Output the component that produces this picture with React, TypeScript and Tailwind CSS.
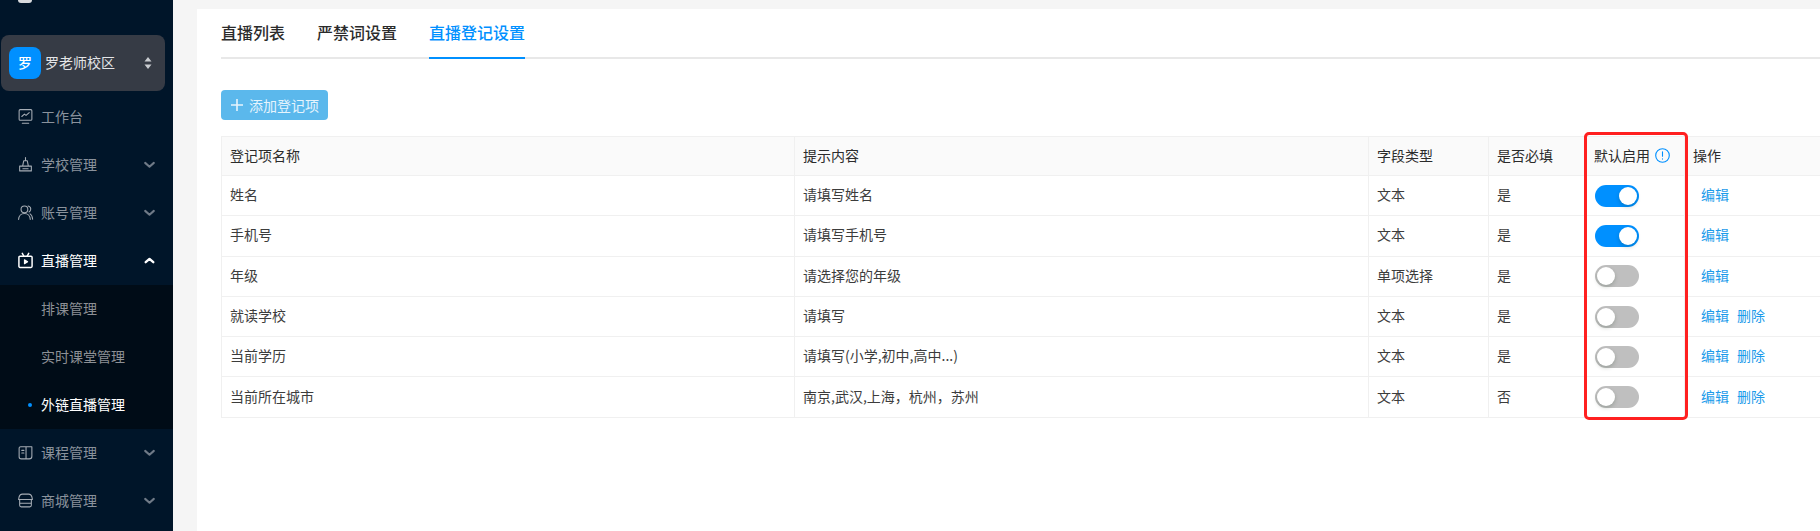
import React from "react";

const font = { fontFamily: '"Noto Sans CJK SC", "Noto Sans", sans-serif' };

const I = ({ children }: { children: React.ReactNode }) => (
  <svg width="17" height="17" viewBox="0 0 16 16" fill="none" stroke="currentColor" strokeWidth="1" strokeLinecap="round" strokeLinejoin="round" className="shrink-0">
    {children}
  </svg>
);

const Chevron = ({ up }: { up?: boolean }) => (
  <svg width="13" height="13" viewBox="0 0 12 12" fill="none" stroke="currentColor" strokeWidth={up ? 2.2 : 1.9} strokeLinecap="round" strokeLinejoin="round" className={up ? "text-white" : "text-[#6f7a87]"}>
    {up ? <path d="M2.500 7.500 6 4.500l3.500 3" /> : <path d="M2 4.500 6 8l4-3.500" />}
  </svg>
);

const icons: Record<string, React.ReactNode> = {
  work: <I><rect x="2" y="1.500" width="12" height="10" rx="1" /><path d="M4.500 8 7 5.800l1.500 1.200L11.500 4.300M5 14.300h6" /></I>,
  school: <I><path d="M8 1.500v2.500M6.300 4.500h3.400L10.700 9.500H5.300zM2.500 9.500h11v4.500h-11zM5.500 12h5" /></I>,
  account: <I><circle cx="7" cy="5" r="3.200" /><path d="M1.500 14.500c.2-3.200 2.500-5.500 5.500-5.500s5.300 2.300 5.500 5.500M10.500 1.900c1.700.5 2.700 2.100 2.300 3.700-.2.800-.7 1.500-1.500 1.900M12.300 9.300c1.400.8 2.200 2.700 2.400 5" /></I>,
  live: <I><rect x="1.800" y="4" width="12.400" height="10.500" rx="1" strokeWidth="1.400" /><path d="M5 1.300 6.500 4M11 1.300 9.500 4" strokeWidth="1.400" /><path d="M7 7.300 10 9.200l-3 1.900z" fill="currentColor" /></I>,
  course: <I><path d="M3.500 2.500H14v9c0 1.400-1 2.500-2.500 2.500H4c-1.200 0-2-.9-2-2V4c0-.8.700-1.500 1.500-1.500zM8.500 2.500V14M4.500 6h2M4.500 8.500h2" /></I>,
  mall: <I><path d="M5 2h6c1.500 0 2.500 1 3 2.500L14.500 7h-13L2 4.500C2.500 3 3.500 2 5 2zM2.500 7v5.500c0 .8.700 1.500 1.500 1.500h8c.8 0 1.500-.7 1.500-1.500V7M2.500 10.500h11" /></I>,
};

const MenuItem = ({ icon, label, chevron, active }: { icon: string; label: string; chevron?: boolean; active?: boolean }) => (
  <div className={`flex h-12 items-center pb-[2px] pl-[17px] pr-[17px] text-sm ${active ? "text-white" : "text-[#8a929c]"}`}>
    <span className={`w-[24px] ${active ? "text-white" : "text-[#a6adb5]"}`}>{icons[icon]}</span>
    <span className="flex-1">{label}</span>
    {chevron && <Chevron up={active} />}
  </div>
);

const SubItem = ({ label, active }: { label: string; active?: boolean }) => (
  <div className={`relative flex h-12 items-center pb-[2px] pl-[41px] text-sm ${active ? "text-white" : "text-[#8d9095]"}`}>
    {active && <span className="absolute left-[28px] top-[22px] h-[4px] w-[4px] rounded-full bg-[#0090ff]" />}
    {label}
  </div>
);

const Switch = ({ on }: { on?: boolean }) => (
  <span className={`flex h-[22px] w-[44px] items-center rounded-full p-[2px] ${on ? "justify-end bg-[#0090ff]" : "justify-start bg-[#bfbfbf]"}`}>
    <span className="h-[18px] w-[18px] rounded-full bg-white shadow-[0_2px_4px_rgba(0,35,11,0.2)]" />
  </span>
);

const rows = [
  ["姓名", "请填写姓名", "文本", "是", true, false],
  ["手机号", "请填写手机号", "文本", "是", true, false],
  ["年级", "请选择您的年级", "单项选择", "是", false, false],
  ["就读学校", "请填写", "文本", "是", false, true],
  ["当前学历", "请填写(小学,初中,高中...)", "文本", "是", false, true],
  ["当前所在城市", "南京,武汉,上海，杭州，苏州", "文本", "否", false, true],
] as const;

const th = "h-[39px] border border-[#f0f0f0] bg-[#fafafa] px-[8px] pb-[3px] text-left align-middle text-sm font-normal text-[#2b2b2b]";
const td = "h-[40.3px] border border-[#f0f0f0] px-[8px] align-middle text-sm text-[#3c3c3c]";

export default function App() {
  return (
    <div style={font} className="flex h-[531px] w-[1820px] overflow-hidden bg-[#f5f5f5]">
      <aside className="h-full w-[173px] shrink-0 overflow-hidden bg-[#001529]">
        <div className="h-[35px] pl-[18px]">
          <span className="block h-[3px] w-[14px] rounded-b-full bg-[#d8dadd]" />
        </div>
        <div className="mx-[1px] flex h-[56px] w-[164px] items-center rounded-lg bg-[#363b45] pl-[8px] pr-[13px]">
          <span className="flex h-8 w-8 items-center justify-center rounded-lg bg-[#0090ff] pb-[2px] text-sm font-medium text-white">罗</span>
          <span className="ml-[4px] flex-1 pb-[2px] text-sm text-[#e4e5e7]">罗老师校区</span>
          <svg width="8" height="14" viewBox="0 0 8 14" fill="#c9ccd0"><path d="M4 1 7.500 5.500H.5zM4 13 .5 8.500h7z" /></svg>
        </div>
        <div className="h-[2px]" />
        <MenuItem icon="work" label="工作台" />
        <MenuItem icon="school" label="学校管理" chevron />
        <MenuItem icon="account" label="账号管理" chevron />
        <MenuItem icon="live" label="直播管理" chevron active />
        <div className="bg-[#000c17]">
          <SubItem label="排课管理" />
          <SubItem label="实时课堂管理" />
          <SubItem label="外链直播管理" active />
        </div>
        <MenuItem icon="course" label="课程管理" chevron />
        <MenuItem icon="mall" label="商城管理" chevron />
      </aside>

      <div className="min-w-0 flex-1 pl-[24px] pt-[9px]">
        <main className="h-full overflow-hidden bg-white pl-[24px]">
          <div className="flex h-[50px] items-center gap-[32px] border-b-2 border-[#e8e8e8] text-base font-medium text-[#2b2b2b]">
            <span className="pb-[3px]">直播列表</span>
            <span className="pb-[3px]">严禁词设置</span>
            <span className="relative flex h-[50px] items-center pb-[3px] text-[#0090ff]">
              直播登记设置
              <span className="absolute bottom-[-1px] left-0 h-[2px] w-full bg-[#0090ff]" />
            </span>
          </div>

          <button className="mt-[31px] flex h-[30px] w-[107px] items-center justify-center gap-[5px] rounded bg-[#5bb8ec] pb-[1px] text-sm text-[#e6f4fd]">
            <svg width="14" height="14" viewBox="0 0 14 14" stroke="currentColor" strokeWidth="1.600" fill="none"><path d="M7 1v12M1 7h12" /></svg>
            添加登记项
          </button>

          <div className="relative mt-[16px] w-[1640px]">
            <table className="w-[1640px] table-fixed border-collapse">
              <colgroup>
                <col className="w-[573px]" />
                <col className="w-[574px]" />
                <col className="w-[120px]" />
                <col className="w-[97px]" />
                <col className="w-[99px]" />
                <col />
              </colgroup>
              <thead>
                <tr>
                  <th className={th}>登记项名称</th>
                  <th className={th}>提示内容</th>
                  <th className={th}>字段类型</th>
                  <th className={th}>是否必填</th>
                  <th className={th}>
                    <span className="flex items-center gap-[5px]">
                      默认启用
                      <svg width="15" height="15" viewBox="0 0 15 15" fill="none" stroke="#0090ff" strokeWidth="1.100" strokeLinecap="round" className="mt-[1px]">
                        <circle cx="7.500" cy="7.500" r="6.800" />
                        <path d="M7.500 3.800v4.400M7.500 10.800v.3" />
                      </svg>
                    </span>
                  </th>
                  <th className={th}>操作</th>
                </tr>
              </thead>
              <tbody>
                {rows.map((r) => (
                  <tr key={r[0]}>
                    <td className={`${td} pb-[3px]`}>{r[0]}</td>
                    <td className={`${td} pb-[3px]`}>{r[1]}</td>
                    <td className={`${td} pb-[3px]`}>{r[2]}</td>
                    <td className={`${td} pb-[3px]`}>{r[3]}</td>
                    <td className={td}>
                      <span className="block pl-[1px]"><Switch on={r[4]} /></span>
                    </td>
                    <td className={`${td} pb-[3px]`}>
                      <span className="flex gap-[8px] pl-[8px] text-[#1c9bea]">
                        <span>编辑</span>
                        {r[5] && <span>删除</span>}
                      </span>
                    </td>
                  </tr>
                ))}
              </tbody>
            </table>
            <div className="pointer-events-none absolute left-[1363px] top-[-4px] h-[288px] w-[104px] rounded-[5px] border-[3px] border-[#ff2020]" />
          </div>
        </main>
      </div>
    </div>
  );
}
